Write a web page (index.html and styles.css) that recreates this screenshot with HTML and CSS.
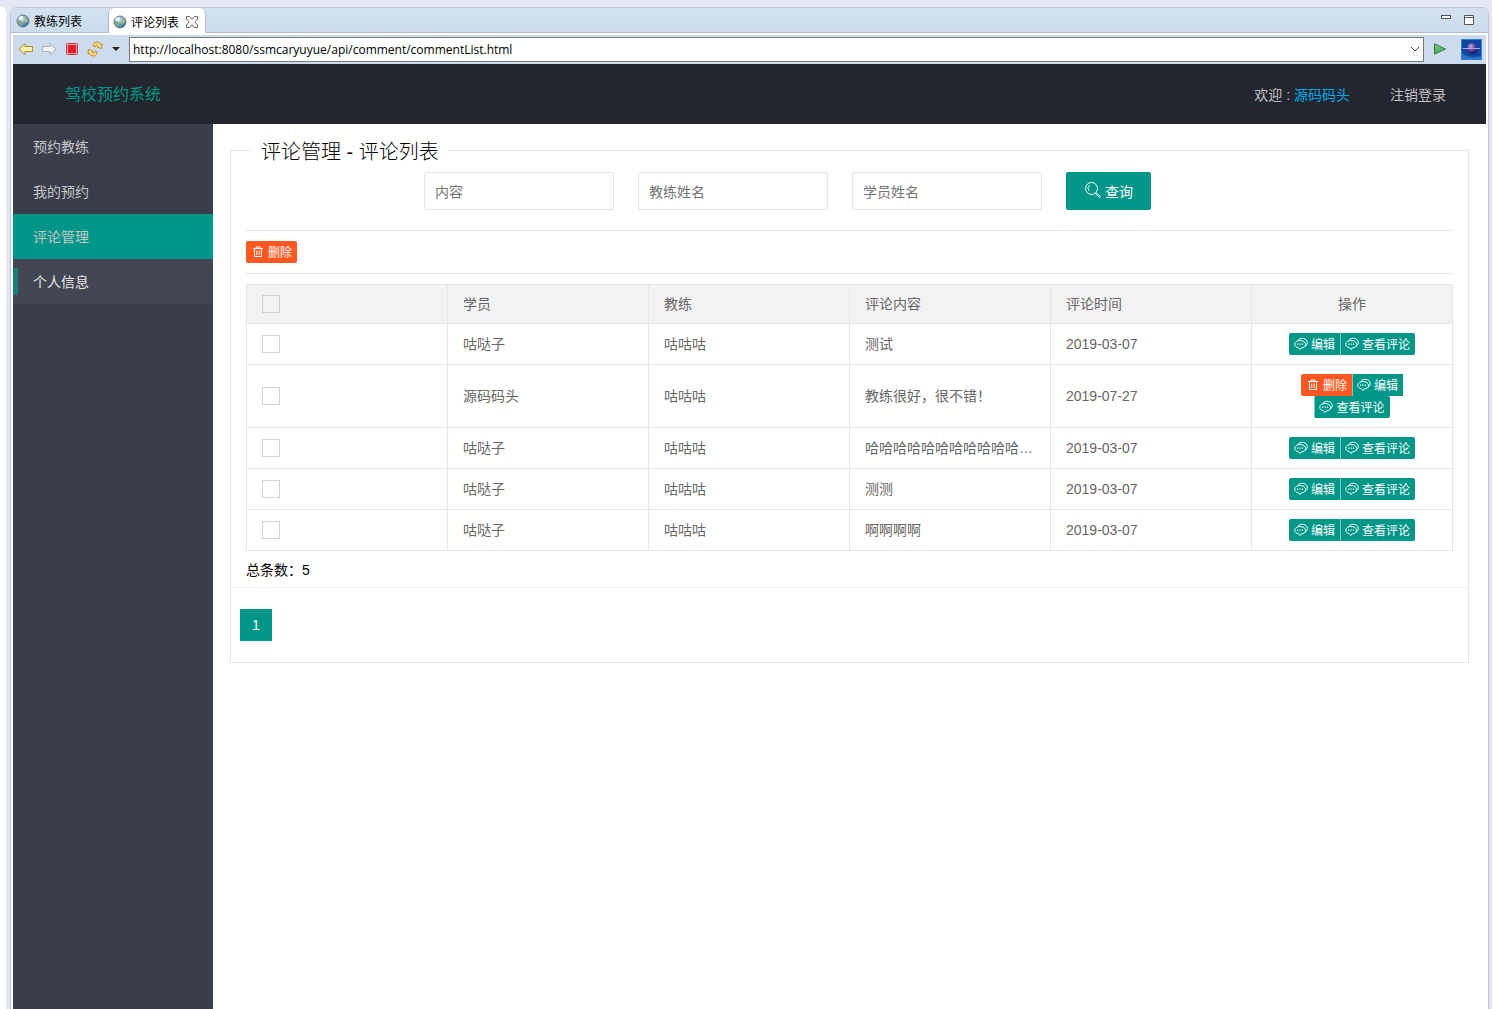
FILE: index.html
```html
<!DOCTYPE html>
<html lang="zh-CN">

<head>
  <meta charset="UTF-8">
  <meta name="viewport" content="width=device-width, initial-scale=1.0">
  <title>评论列表</title>
  <link rel="stylesheet" href="styles.css">
</head>

<body>
  <!-- 图标 -->
  <svg class="sprite" aria-hidden="true">
    <defs>
      <radialGradient id="globe-fill" cx="0.35" cy="0.3" r="0.8">
        <stop offset="0" stop-color="#e6f3fa" />
        <stop offset="0.45" stop-color="#7fb0d0" />
        <stop offset="1" stop-color="#1f5a86" />
      </radialGradient>
      <linearGradient id="go-fill" x1="0" y1="0" x2="0" y2="1">
        <stop offset="0" stop-color="#8ccc8c" />
        <stop offset="1" stop-color="#3f9c58" />
      </linearGradient>
      <radialGradient id="orb-fill" cx="0.4" cy="0.3" r="0.7">
        <stop offset="0" stop-color="#c3b2ea" />
        <stop offset="0.4" stop-color="#6a55ae" />
        <stop offset="1" stop-color="#1d1450" />
      </radialGradient>
    </defs>
    <symbol id="globe" viewBox="0 0 14 14">
      <circle cx="7" cy="7" r="6" fill="url(#globe-fill)" stroke="#5f8099" />
      <path d="M2.500 3.500Q4.500 1.500 6.500 2L7 4L5 5.500L3 5.500Z" fill="#f2f8fa" />
      <path d="M1.500 6L4 6.500L6.500 8.500L5.500 11.500L4 11.500Q2 9.500 1.500 6Z" fill="#8fa75c" />
      <path d="M8.500 2.500L11 4L12 7L10.500 9L8.500 7L9 5Z" fill="#b3b872" />
    </symbol>
    <symbol id="chat" viewBox="0 0 14 14">
      <path d="M4 3.300C6-.2 13.300 1 13.300 5.500C13.300 7.400 12.400 8.500 11 9.300" fill="none" stroke="currentColor" />
      <path d="M6 3.500C3 3.500.7 5 .7 7.200C.7 9 2.200 10.200 4.300 10.700L6 12.500L7.200 10.900C10 10.800 11.600 9.200 11.600 7.300C11.600 5 9 3.500 6 3.500Z" fill="none" stroke="currentColor" />
      <path d="M3 6.500h1.300v1.300H3ZM5.400 6.500h1.300v1.300H5.400ZM7.800 6.500h1.300v1.300H7.800Z" fill="currentColor" />
    </symbol>
    <symbol id="trash" viewBox="0 0 12 12">
      <path d="M1 2.500h10M4 2V1h4v1M2.500 3v7.500h7v-7.500M4.800 4.500v4.500M7.200 4.500v4.500" fill="none" stroke="currentColor" />
    </symbol>
  </svg>

  <div class="side-view"></div>
  <div class="editor">
    <div class="tab-bar">
      <div class="tab"><svg width="14" height="14"><use href="#globe" /></svg><span>教练列表</span></div>
      <div class="tab tab-active">
        <svg width="14" height="14"><use href="#globe" /></svg><span>评论列表</span>
        <button class="tab-close" aria-label="关闭">
          <svg width="12" height="12" viewBox="0 0 12 12" fill="none" stroke="#666">
            <path d="M.5.5h3l2.500 2.700l2.500-2.700h3v2.500l-2.700 3l2.700 3v2.500h-3l-2.500-2.700l-2.500 2.700h-3v-2.500l2.700-3l-2.700-3z" />
          </svg>
        </button>
      </div>
      <div class="window-tools">
        <button aria-label="最小化"><svg width="10" height="10"><rect x=".5" y=".5" width="9" height="3" fill="#fff" stroke="#555" /></svg></button>
        <button aria-label="最大化"><svg width="10" height="10"><path d="M.5.5h9v9h-9zM0 2.500h10" fill="#fff" stroke="#555" /></svg></button>
      </div>
    </div>

    <div class="toolbar">
      <button aria-label="后退">
        <svg width="16" height="14" viewBox="0 0 16 14"><path d="M1 7L7 1.500V4.500H14.500V9.500H7V12.500Z" fill="#fdf0b4" stroke="#b8862b" stroke-linejoin="round" /></svg>
      </button>
      <button aria-label="前进">
        <svg width="16" height="14" viewBox="0 0 16 14"><path d="M15 7L9 1.500V4.500H1.500V9.500H9V12.500Z" fill="#f2f3f5" stroke="#aaaeb5" stroke-linejoin="round" /></svg>
      </button>
      <button aria-label="停止">
        <svg width="16" height="14" viewBox="0 0 16 14"><rect x="2.500" y="1.500" width="11" height="11" rx="1" fill="#f5a5a5" stroke="#c6383f" /><rect x="4" y="3" width="8" height="8" fill="#e01f2d" /></svg>
      </button>
      <button aria-label="刷新">
        <svg width="16" height="16" viewBox="0 0 16 16" fill="#fbe08a" stroke="#c08a35" stroke-linejoin="round">
          <path d="M6.500 5.500Q5.500 1.500 9.500 1Q12.500.8 13.500 3.500L15 3L14.500 7.500L10 6L11.200 5Q10.500 3.500 9 4Q8 4.500 8.500 6Z" />
          <path d="M9.500 10.500Q10.500 14.500 6.500 15Q3.500 15.200 2.500 12.500L1 13L1.500 8.500L6 10L4.800 11Q5.500 12.500 7 12Q8 11.500 7.500 10Z" />
        </svg>
      </button>
      <button class="drop" aria-label="刷新选项"><svg width="8" height="4"><path d="M0 0h8L4 4z" fill="#222" /></svg></button>
      <div class="address">
        <input type="text" aria-label="地址" value="http://localhost:8080/ssmcaryuyue/api/comment/commentList.html">
        <button aria-label="历史地址"><svg width="10" height="6" viewBox="0 0 10 6"><path d="M1 1l4 4l4-4" fill="none" stroke="#444" /></svg></button>
      </div>
      <button class="go" aria-label="转到"><svg width="14" height="12" viewBox="0 0 14 12"><path d="M1.500.8L12.500 6L1.500 11.200Z" fill="url(#go-fill)" stroke="#2c8047" /></svg></button>
      <svg width="21" height="21" viewBox="0 0 21 21">
        <rect x=".5" y=".5" width="20" height="20" fill="#0d479f" stroke="#3280d0" />
        <path d="M1 20V14Q8 20 20 17V20Z" fill="#2671c8" />
        <circle cx="11" cy="9.500" r="5.500" fill="url(#orb-fill)" />
        <path d="M2 9.500h17" stroke="#b6a3e8" />
      </svg>
    </div>

    <header class="header">
      <div class="logo">驾校预约系统</div>
      <div class="user">欢迎 : <a href="#">源码码头</a></div>
      <a class="logout" href="#">注销登录</a>
    </header>

    <div class="page">
      <nav class="side-nav">
        <a href="#">预约教练</a>
        <a href="#">我的预约</a>
        <a class="nav-this" href="#">评论管理</a>
        <a class="nav-hover" href="#">个人信息</a>
      </nav>

      <main class="main">
        <fieldset class="panel">
          <legend>评论管理 - 评论列表</legend>
          <form class="search">
            <input type="text" placeholder="内容" aria-label="内容">
            <input type="text" placeholder="教练姓名" aria-label="教练姓名">
            <input type="text" placeholder="学员姓名" aria-label="学员姓名">
            <button type="button" class="btn-search">
              <svg width="18" height="18" viewBox="0 0 18 18" fill="none" stroke="currentColor">
                <circle cx="7.500" cy="7.500" r="6" />
                <path d="M4.800 9.800Q2.800 6.500 5.500 4.200M12 11.500L16.500 15.500L15.500 16.700L11.300 12.500" />
              </svg>
              <span>查询</span>
            </button>
          </form>
          <div class="actions">
            <button class="btn btn-danger"><svg width="12" height="12"><use href="#trash" /></svg>删除</button>
          </div>

          <table class="list">
            <thead>
              <tr>
                <th><input type="checkbox" aria-label="全选"></th>
                <th>学员</th>
                <th>教练</th>
                <th>评论内容</th>
                <th>评论时间</th>
                <th class="ops">操作</th>
              </tr>
            </thead>
            <tbody>
              <tr>
                <td><input type="checkbox" aria-label="选择"></td>
                <td>咕哒子</td>
                <td>咕咕咕</td>
                <td>测试</td>
                <td>2019-03-07</td>
                <td class="ops">
                  <div class="btn-group">
                    <button class="btn"><svg width="14" height="14"><use href="#chat" /></svg>编辑</button>
                    <button class="btn"><svg width="14" height="14"><use href="#chat" /></svg>查看评论</button>
                  </div>
                </td>
              </tr>
              <tr>
                <td><input type="checkbox" aria-label="选择"></td>
                <td>源码码头</td>
                <td>咕咕咕</td>
                <td>教练很好，很不错！</td>
                <td>2019-07-27</td>
                <td class="ops">
                  <div class="btn-group">
                    <button class="btn btn-danger"><svg width="12" height="12"><use href="#trash" /></svg>删除</button>
                    <button class="btn"><svg width="14" height="14"><use href="#chat" /></svg>编辑</button>
                    <button class="btn"><svg width="14" height="14"><use href="#chat" /></svg>查看评论</button>
                  </div>
                </td>
              </tr>
              <tr>
                <td><input type="checkbox" aria-label="选择"></td>
                <td>咕哒子</td>
                <td>咕咕咕</td>
                <td>哈哈哈哈哈哈哈哈哈哈哈哈哈哈</td>
                <td>2019-03-07</td>
                <td class="ops">
                  <div class="btn-group">
                    <button class="btn"><svg width="14" height="14"><use href="#chat" /></svg>编辑</button>
                    <button class="btn"><svg width="14" height="14"><use href="#chat" /></svg>查看评论</button>
                  </div>
                </td>
              </tr>
              <tr>
                <td><input type="checkbox" aria-label="选择"></td>
                <td>咕哒子</td>
                <td>咕咕咕</td>
                <td>测测</td>
                <td>2019-03-07</td>
                <td class="ops">
                  <div class="btn-group">
                    <button class="btn"><svg width="14" height="14"><use href="#chat" /></svg>编辑</button>
                    <button class="btn"><svg width="14" height="14"><use href="#chat" /></svg>查看评论</button>
                  </div>
                </td>
              </tr>
              <tr>
                <td><input type="checkbox" aria-label="选择"></td>
                <td>咕哒子</td>
                <td>咕咕咕</td>
                <td>啊啊啊啊</td>
                <td>2019-03-07</td>
                <td class="ops">
                  <div class="btn-group">
                    <button class="btn"><svg width="14" height="14"><use href="#chat" /></svg>编辑</button>
                    <button class="btn"><svg width="14" height="14"><use href="#chat" /></svg>查看评论</button>
                  </div>
                </td>
              </tr>
            </tbody>
          </table>

          <div class="total">总条数：5</div>
          <div class="pager"><a href="#">1</a></div>
        </fieldset>
      </main>
    </div>
  </div>
</body>

</html>
```
FILE: styles.css
```css
* {
  margin: 0;
  padding: 0;
  box-sizing: border-box;
}

body {
  display: flex;
  min-height: 100vh;
  padding: 7px 3px 0 0;
  background: #e3e7f6;
  font-family: "Liberation Sans", "Noto Sans CJK SC", sans-serif;
  font-size: 14px;
  line-height: 24px;
}

a {
  color: inherit;
  text-decoration: none;
}

button {
  border: none;
  background: none;
  font-family: inherit;
  cursor: pointer;
}

svg {
  display: block;
  flex-shrink: 0;
}

.sprite {
  position: absolute;
  width: 0;
  height: 0;
}

/* 窗口 */
.side-view {
  width: 6px;
  margin-right: 4px;
  background: #fff;
  border-top-right-radius: 5px;
}

.editor {
  flex: 1;
  display: flex;
  flex-direction: column;
  min-width: 0;
  border: 1px solid #c3c7cd;
  border-bottom: none;
  border-radius: 7px 7px 0 0;
  background: #fff;
}

.tab-bar {
  display: flex;
  height: 25px;
  border-bottom: 1px solid #b5bad3;
  border-radius: 6px 6px 0 0;
  background: linear-gradient(#d3e1ef, #cbdcec);
}

.tab {
  display: flex;
  align-items: center;
  column-gap: 4px;
  width: 97px;
  padding: 2px 0 0 5px;
  font-size: 12px;
  line-height: 20px;
  color: #000;
}

.tab span {
  padding-top: 2px;
}

.tab-active {
  height: 25px;
  width: 98px;
  border: 1px solid #b5bad3;
  border-top: none;
  border-bottom: none;
  border-radius: 6px 6px 0 0;
  background: #fff;
  padding-left: 4px;
}

.tab-close {
  padding-left: 3px;
}

.window-tools {
  display: flex;
  align-items: center;
  column-gap: 13px;
  margin-left: auto;
  padding-right: 14px;
}

.toolbar {
  display: flex;
  align-items: center;
  column-gap: 7px;
  height: 29px;
  margin: 2px 2px 0;
  padding: 0 4px 1px 5px;
  background: #cddcec;
}

.toolbar .drop {
  padding: 0 2px;
}

.toolbar .go {
  padding: 0 7px 0 2px;
}

.address {
  flex: 1;
  display: flex;
  height: 25px;
  border: 1px solid #7a7a7a;
  background: #fff;
}

.address input {
  flex: 1;
  border: none;
  outline: none;
  padding-left: 3px;
  font-family: "Open Sans", sans-serif;
  font-size: 12px;
  color: #000;
}

.address button {
  padding: 0 3px;
}

/* 顶部 */
.header {
  display: flex;
  align-items: center;
  height: 60px;
  margin: 0 2px;
  padding: 2px 40px 0 52px;
  background: #23262e;
  color: #c2c2c4;
}

.logo {
  flex: 1;
  font-size: 16px;
  color: #009688;
}

.user a {
  color: #01aaed;
}

.logout {
  margin-left: 40px;
}

/* 侧边导航 */
.page {
  flex: 1;
  display: flex;
  margin: 0 2px;
}

.side-nav {
  width: 200px;
  background: #393d49;
}

.side-nav a {
  display: block;
  padding: 2px 0 0 20px;
  line-height: 43px;
  color: #c4c5c8;
}

.side-nav .nav-this {
  background: #009688;
}

.side-nav .nav-hover {
  background: linear-gradient(#197c77, #197c77) no-repeat 0 9px / 5px 27px #424652;
  color: #e8e8e9;
}

/* 内容 */
.main {
  flex: 1;
  min-width: 0;
  padding: 11px 17px;
}

.panel {
  border: 1px solid #e6e6e6;
}

.panel legend {
  margin-left: 20px;
  padding: 4px 10px 0;
  font-size: 20px;
  font-weight: 300;
  line-height: 26px;
  color: #000;
}

.search {
  display: flex;
  column-gap: 24px;
  margin: 7px 15px 0;
  padding: 0 0 20px 178px;
  border-bottom: 1px solid #e6e6e6;
}

.search input {
  width: 190px;
  height: 38px;
  padding: 2px 0 0 10px;
  border: 1px solid #e6e6e6;
  border-radius: 2px;
  font-family: inherit;
  font-size: 14px;
}

.search input::placeholder {
  color: #757575;
}

.btn-search {
  display: flex;
  align-items: center;
  justify-content: center;
  column-gap: 3px;
  width: 85px;
  height: 38px;
  border-radius: 2px;
  background: #009688;
  color: #fff;
  font-size: 14px;
}

.btn-search svg {
  margin-bottom: 2px;
}

.actions {
  display: flex;
  margin: 0 15px 10px;
  padding: 10px 0;
  border-bottom: 1px solid #e6e6e6;
}

.btn {
  display: flex;
  align-items: center;
  column-gap: 3px;
  height: 22px;
  padding: 2px 5px 0;
  border-radius: 2px;
  background: #009688;
  color: #fff;
  font-size: 12px;
  line-height: 20px;
}

.btn svg {
  margin-bottom: 2px;
}

.btn-danger {
  column-gap: 4px;
  padding-left: 6px;
  background: #ff5722;
}

.btn-group {
  display: flex;
  flex-wrap: wrap;
  justify-content: center;
  padding: 0 18px;
}

.btn-group .btn {
  border-radius: 0;
}

.btn-group .btn:first-child {
  border-radius: 2px 0 0 2px;
}

.btn-group .btn:last-child {
  border-radius: 0 2px 2px 0;
}

.btn-group .btn + .btn {
  padding-left: 4px;
  border-left: 1px solid #80cbc4;
}

.list {
  width: calc(100% - 30px);
  margin: 0 15px;
  border-collapse: collapse;
  table-layout: fixed;
  color: #666;
}

.list th,
.list td {
  height: 41px;
  padding: 9px 15px;
  border: 1px solid #e6e6e6;
  font-weight: 400;
  line-height: 22px;
  text-align: left;
  white-space: nowrap;
  overflow: hidden;
  text-overflow: ellipsis;
}

.list th {
  height: 39px;
  padding: 8px 15px;
  background: #f2f2f2;
}

.list .ops {
  text-align: center;
}

.list input {
  display: block;
  appearance: none;
  width: 18px;
  height: 18px;
  border: 1px solid #d2d2d2;
}

.total {
  padding: 7px 15px 5px;
  color: #000;
}

.pager {
  padding: 21px 9px;
  border-top: 1px dotted #e6e6e6;
}

.pager a {
  display: block;
  width: 32px;
  height: 32px;
  background: #009688;
  color: #fff;
  line-height: 32px;
  text-align: center;
}
```
